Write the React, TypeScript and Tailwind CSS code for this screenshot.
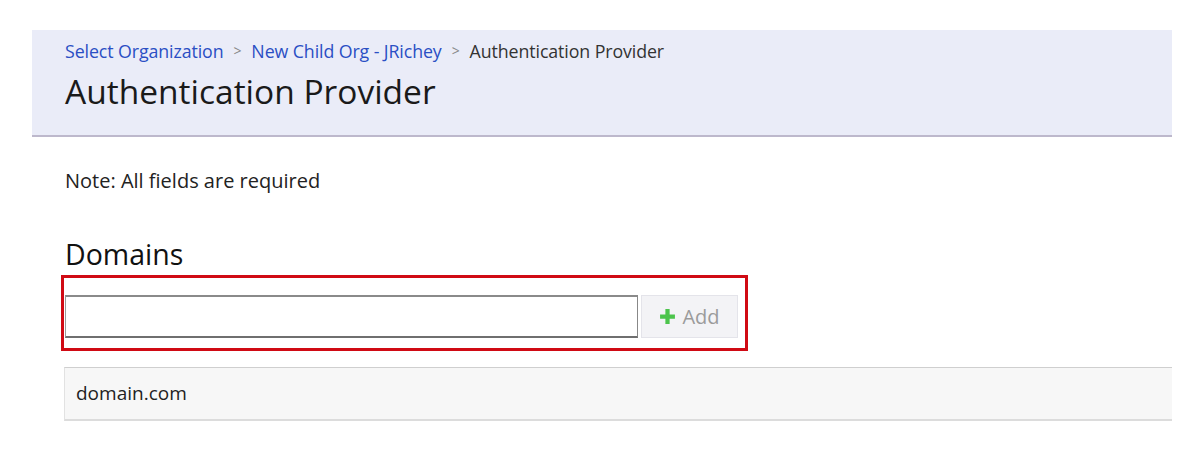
import React from "react";

export default function App() {
  return (
    <div className="w-[1200px] h-[467px] bg-white text-[#222] overflow-hidden" style={{ fontFamily: "'Open Sans', Lato, sans-serif" }}>
      <div className="pl-[32px] pr-[28px] pt-[30px]">
        <div className="h-[107px] bg-[#eaecf8] border-b-2 border-[#bdb8cc] pl-[33px] pt-[9px]">
          <div className="flex items-center text-[17.8px] leading-[24px] gap-[10px] tracking-[-0.1px]">
            <span className="text-[#2a4fc4]">Select Organization</span>
            <span className="text-[#888] text-[14px]">&gt;</span>
            <span className="text-[#2a4fc4]">New Child Org - JRichey</span>
            <span className="text-[#888] text-[14px]">&gt;</span>
            <span className="text-[#333]">Authentication Provider</span>
          </div>
          <div className="text-[33.5px] leading-[40px] mt-[8px] text-[#1a1a1a]">Authentication Provider</div>
        </div>
      </div>
      <div className="pl-[61px] pr-[28px]">
        <div className="pl-[4px] mt-[31px] text-[20px] leading-[26px] text-[#222]">Note: All fields are required</div>
        <div className="pl-[4px] mt-[43px] text-[28.5px] leading-[34px] text-[#111]">Domains</div>
        <div className="mt-[4px] w-[687px] h-[76px] border-[3px] border-[#d00a14] pl-[1px] pt-[17px] flex">
          <div className="w-[573px] h-[43px] bg-white border-t-2 border-l border-b-2 border-r border-t-[#8a8a8a] border-l-[#9a9a9a] border-b-[#6f6f6f] border-r-[#888]"></div>
          <div className="ml-[3px] w-[97px] h-[43px] bg-[#f3f3f6] border border-[#e4e4ea] flex items-center justify-center gap-[6px]">
            <svg width="17" height="17" viewBox="0 0 16 16">
              <path d="M6 1h4v5h5v4h-5v5H6v-5H1V6h5z" fill="#4cc44c" />
            </svg>
            <span className="text-[20px] text-[#9b9b9b]">Add</span>
          </div>
        </div>
        <div className="mt-[16px] ml-[3px] h-[54px] bg-[#f7f7f7] border-t border-t-[#cfcfcf] border-l border-l-[#e2e2e2] border-b-2 border-b-[#dcdcdc] flex items-center pl-[11px] text-[19px] text-[#222]">
          domain.com
        </div>
      </div>
    </div>
  );
}
